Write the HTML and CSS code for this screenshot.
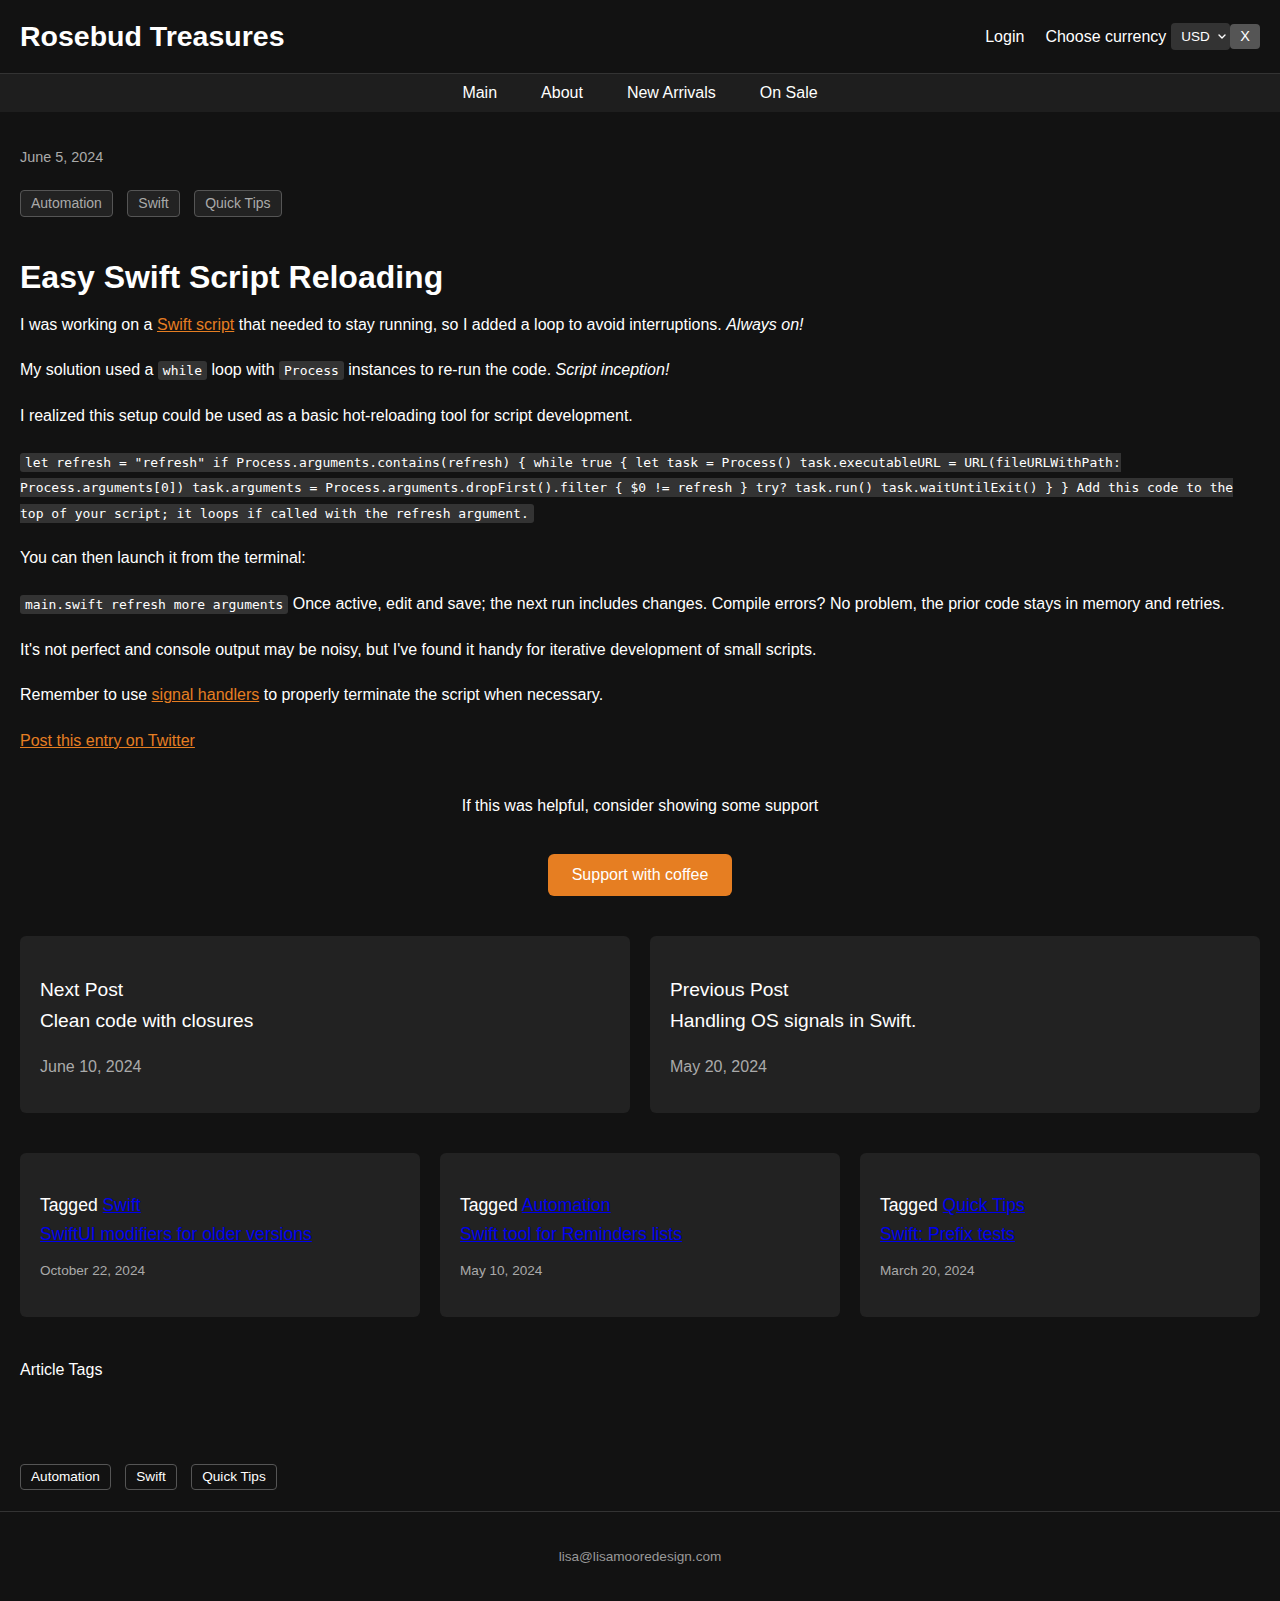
FILE: index.html
```html
<!DOCTYPE html>
<html lang="en">
<head>
<meta charset="utf-8">
<title>Easy Swift Script Reloading - Rosebud Treasures</title>
<link rel="stylesheet" href="styles.css">
</head>
<body>
<header class="site-header">
  <div class="brand">Rosebud Treasures</div>
  <div class="header-actions">
    <a class="login" href="#">Login</a>
    <span class="currency-label">Choose currency</span>
    <span class="select-wrap">
      <select class="currency"><option>USD</option><option>EUR</option></select>
      <svg class="chev" width="8" height="5" viewBox="0 0 8 5"><path d="M1 1l3 3 3-3" fill="none" stroke="#fff" stroke-width="1.4" stroke-linecap="round" stroke-linejoin="round"/></svg>
    </span>
    <button class="close-btn">X</button>
  </div>
</header>
<nav class="main-nav">
  <a href="#">Main</a>
  <a href="#">About</a>
  <a href="#">New Arrivals</a>
  <a href="#">On Sale</a>
</nav>
<main class="content">
  <div class="post-date">June 5, 2024</div>
  <div class="tags top-tags">
    <span class="tag">Automation</span>
    <span class="tag">Swift</span>
    <span class="tag">Quick Tips</span>
  </div>
  <h1 class="post-title">Easy Swift Script Reloading</h1>
  <p>I was working on a <a class="orange" href="#">Swift script</a> that needed to stay running, so I added a loop to avoid interruptions. <em>Always on!</em></p>
  <p>My solution used a <code>while</code> loop with <code>Process</code> instances to re-run the code. <em>Script inception!</em></p>
  <p>I realized this setup could be used as a basic hot-reloading tool for script development.</p>
  <p><code>let refresh = "refresh" if Process.arguments.contains(refresh) { while true { let task = Process() task.executableURL = URL(fileURLWithPath: Process.arguments[0]) task.arguments = Process.arguments.dropFirst().filter { $0 != refresh } try? task.run() task.waitUntilExit() } } Add this code to the top of your script; it loops if called with the refresh argument.</code></p>
  <p>You can then launch it from the terminal:</p>
  <p><code>main.swift refresh more arguments</code> Once active, edit and save; the next run includes changes. Compile errors? No problem, the prior code stays in memory and retries.</p>
  <p>It's not perfect and console output may be noisy, but I've found it handy for iterative development of small scripts.</p>
  <p>Remember to use <a class="orange" href="#">signal handlers</a> to properly terminate the script when necessary.</p>
  <p><a class="orange" href="#">Post this entry on Twitter</a></p>

  <section class="support">
    <p class="support-text">If this was helpful, consider showing some support</p>
    <a class="coffee-btn" href="#">Support with coffee</a>
  </section>

  <section class="post-nav">
    <div class="card nav-card">
      <div class="nav-label">Next Post</div>
      <div class="nav-title">Clean code with closures</div>
      <div class="nav-date">June 10, 2024</div>
    </div>
    <div class="card nav-card">
      <div class="nav-label">Previous Post</div>
      <div class="nav-title">Handling OS signals in Swift.</div>
      <div class="nav-date">May 20, 2024</div>
    </div>
  </section>

  <section class="related">
    <div class="card rel-card">
      <div class="rel-tag">Tagged <a href="#">Swift</a></div>
      <div class="rel-title"><a href="#">SwiftUI modifiers for older versions</a></div>
      <div class="rel-date">October 22, 2024</div>
    </div>
    <div class="card rel-card">
      <div class="rel-tag">Tagged <a href="#">Automation</a></div>
      <div class="rel-title"><a href="#">Swift tool for Reminders lists</a></div>
      <div class="rel-date">May 10, 2024</div>
    </div>
    <div class="card rel-card">
      <div class="rel-tag">Tagged <a href="#">Quick Tips</a></div>
      <div class="rel-title"><a href="#">Swift: Prefix tests</a></div>
      <div class="rel-date">March 20, 2024</div>
    </div>
  </section>

  <div class="article-tags-title">Article Tags</div>
  <div class="tags bottom-tags">
    <span class="tag">Automation</span>
    <span class="tag">Swift</span>
    <span class="tag">Quick Tips</span>
  </div>
</main>
<footer class="site-footer">lisa@lisamooredesign.com</footer>
</body>
</html>
```

FILE: styles.css
```css
* { box-sizing: border-box; }
html, body { margin: 0; padding: 0; }
body {
  background: #121212;
  color: #fff;
  font-family: "Liberation Sans", Arial, sans-serif;
  font-size: 16px;
  line-height: 1.6;
}
a { color: #0000ee; }

.site-header {
  height: 74px;
  border-bottom: 1px solid #333;
  display: flex;
  align-items: center;
  justify-content: space-between;
  padding: 0 20px;
}
.brand {
  font-size: 28.5px;
  font-weight: bold;
  line-height: 1.2;
}
.header-actions {
  display: flex;
  align-items: center;
  line-height: 1.2;
}
.login { color: #fff; text-decoration: none; margin-right: 21px; }
.currency-label { margin-right: 5px; }
.select-wrap { position: relative; display: inline-flex; }
.currency {
  appearance: none;
  -webkit-appearance: none;
  background: #333;
  color: #fff;
  border: none;
  border-radius: 4px;
  height: 27px;
  width: 59px;
  padding: 0 0 0 10px;
  font-family: "Liberation Sans", Arial, sans-serif;
  font-size: 13.5px;
  outline: none;
}
.chev { position: absolute; right: 4px; top: 11px; pointer-events: none; }
.close-btn {
  background: #555;
  color: #fff;
  border: none;
  border-radius: 4px;
  font-family: "Liberation Sans", Arial, sans-serif;
  font-size: 14.5px;
  line-height: 17px;
  padding: 4px 10px;
}

.main-nav {
  background: #1e1e1e;
  height: 38px;
  display: flex;
  justify-content: center;
  align-items: center;
  gap: 44px;
  line-height: 1.2;
}
.main-nav a { color: #fff; text-decoration: none; }

.content { padding: 0 20px; }
.post-date {
  margin-top: 34px;
  font-size: 14.4px;
  line-height: 22px;
  color: #aaa;
}
.tags { display: flex; gap: 14.5px; }
.top-tags { margin-top: 21.5px; }
.tag {
  border: 1px solid #555;
  border-radius: 4px;
  padding: 4px 10px;
  font-size: 14px;
  line-height: 17.4px;
}
.top-tags .tag { background: #222; color: #aaa; }
.bottom-tags .tag { color: #fff; font-size: 13.6px; line-height: 16px; padding: 4px 10px; }

.post-title {
  font-size: 32px;
  line-height: 38.4px;
  margin: 41px 0 15.5px;
}
.content p { margin: 0 0 20px; }
.orange { color: #e67e22; }
code {
  font-family: "DejaVu Sans Mono", monospace;
  font-size: 13px;
  background: #333;
  color: #fff;
  padding: 2px 5px;
  border-radius: 3px;
}

.support { text-align: center; margin-top: 40px; }
.content .support-text { margin: 0 0 35px; }
.coffee-btn {
  display: inline-block;
  background: #e67e22;
  color: #fff;
  text-decoration: none;
  padding: 12px 24px;
  border-radius: 6px;
  line-height: 18.4px;
}

.card { background: #222; border-radius: 6px; padding: 20px; }
.post-nav {
  margin-top: 40px;
  display: grid;
  grid-template-columns: 1fr 1fr;
  gap: 20px;
}
.nav-card { height: 177px; }
.nav-label, .nav-title { font-size: 19.2px; line-height: 30.7px; }
.nav-label { margin-top: 19px; }
.nav-date { font-size: 16px; line-height: 25.6px; color: #aaa; margin-top: 17px; }

.related {
  margin-top: 40px;
  display: grid;
  grid-template-columns: 1fr 1fr 1fr;
  gap: 20px;
}
.rel-card { height: 164px; }
.rel-tag, .rel-title { font-size: 17.6px; line-height: 28.2px; }
.rel-tag { margin-top: 18px; }
.rel-date { font-size: 13.6px; line-height: 21.8px; color: #aaa; margin-top: 12.7px; }

.article-tags-title { margin-top: 39.5px; line-height: 25.6px; }
.bottom-tags { margin-top: 81.5px; }

.site-footer {
  margin-top: 21px;
  border-top: 1px solid #333;
  text-align: center;
  color: #999;
  font-size: 13.6px;
  line-height: 21px;
  padding: 34px 0 35px;
}
```
